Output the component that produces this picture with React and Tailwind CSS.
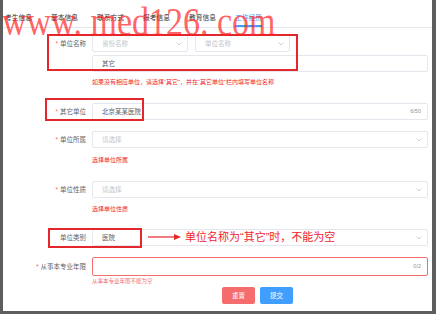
import React from "react";

const Chevron = () => (
  <svg width="6" height="4" viewBox="0 0 6 4" className="shrink-0">
    <path d="M0.6 0.6 L3 3 L5.4 0.6" fill="none" stroke="#c0c4cc" strokeWidth="0.8" />
  </svg>
);

const Label = ({ children, req = true }) => (
  <div className="w-[83px] shrink-0 text-right text-[6.5px] text-[#606266] h-[17px] leading-[17px]">
    {req && <span className="text-[#f56c6c] mr-[2px]">*</span>}
    {children}
  </div>
);

const Select = ({ w, text, placeholder = true }) => (
  <div
    className={`${w} h-[17px] border border-[#e4e7ed] rounded-[2px] flex items-center justify-between pl-[9px] pr-[5px] text-[6.5px] ${
      placeholder ? "text-[#c0c4cc]" : "text-[#606266]"
    }`}
  >
    <span>{text}</span>
    <Chevron />
  </div>
);

const Hint = ({ children, cls }) => (
  <div className={`pl-[89px] text-[6px] leading-[8px] text-[#f0262b] ${cls}`}>{children}</div>
);

export default function App() {
  return (
    <div className="relative w-[436px] h-[314px] overflow-hidden bg-white border-l-[3px] border-r-[4px] border-b-[3px] border-[#5e5e5e] font-['Liberation_Sans','Noto_Sans_CJK_SC',sans-serif]">
      {/* tabs */}
      <div className="flex h-[28px] border-b border-[#e4e7ed] pl-[2px] gap-[19px] text-[6.75px] text-[#303133]">
        {["考生信息", "基本信息", "联系方式", "报考信息", "教育信息"].map((t) => (
          <div key={t} className="h-[27px] pt-[14px] leading-[8px]">{t}</div>
        ))}
        <div className="h-[27px] pt-[14px] leading-[8px] text-[#409eff] border-b-2 border-[#409eff]">工作经历</div>
      </div>

      {/* form */}
      <div className="pr-[4px]">
        <div className="flex mt-[7px]">
          <Label>单位名称</Label>
          <div className="ml-[6px] flex-1 flex flex-col gap-[3px]">
            <div className="flex gap-[7px]">
              <Select w="w-[96px]" text="省份名称" />
              <Select w="w-[95px]" text="单位名称" />
            </div>
            <div className="h-[17px] border border-[#e4e7ed] rounded-[2px] pl-[9px] text-[6.5px] leading-[15px] text-[#606266]">其它</div>
          </div>
        </div>
        <Hint cls="mt-[6px]">如果没有相应单位，请选择“其它”，并在“其它单位”栏内填写单位名称</Hint>

        <div className="flex mt-[17px]">
          <Label>其它单位</Label>
          <div className="ml-[6px] flex-1 h-[17px] border border-[#e4e7ed] rounded-[2px] flex items-center justify-between pl-[9px] pr-[6px] text-[6.5px] text-[#606266]">
            <span>北京某某医院</span>
            <span className="text-[5.5px] text-[#909399]">6/50</span>
          </div>
        </div>

        <div className="flex mt-[11px]">
          <Label>单位所属</Label>
          <div className="ml-[6px] flex-1">
            <Select w="w-full" text="请选择" />
          </div>
        </div>
        <Hint cls="mt-[8px]">选择单位所属</Hint>

        <div className="flex mt-[17px]">
          <Label>单位性质</Label>
          <div className="ml-[6px] flex-1">
            <Select w="w-full" text="请选择" />
          </div>
        </div>
        <Hint cls="mt-[7px]">选择单位性质</Hint>

        <div className="flex mt-[16px]">
          <Label req={false}>单位类别</Label>
          <div className="ml-[6px] flex-1">
            <Select w="w-full" text="医院" placeholder={false} />
          </div>
        </div>

        <div className="flex mt-[11px]">
          <div className="w-[83px] shrink-0 text-right text-[6.5px] text-[#606266] h-[19px] leading-[19px]">
            <span className="text-[#f56c6c] mr-[2px]">*</span>从事本专业年限
          </div>
          <div className="ml-[6px] flex-1 h-[19px] border border-[#f56c6c] rounded-[2px] flex items-center justify-end pr-[6px]">
            <span className="text-[5.5px] text-[#909399]">0/2</span>
          </div>
        </div>
        <div className="pl-[89px] text-[5.5px] leading-[7px] mt-[2px] text-[#f56c6c]">从事本专业年限不能为空</div>

        <div className="flex justify-center gap-[5px] mt-[2px] pl-[84px]">
          <div className="w-[33px] h-[17px] rounded-[2px] bg-[#f56c6c] text-white text-[6.5px] flex items-center justify-center">重置</div>
          <div className="w-[33px] h-[17px] rounded-[2px] bg-[#409eff] text-white text-[6.5px] flex items-center justify-center">提交</div>
        </div>
      </div>

      {/* annotations */}
      <div className="absolute left-[44px] top-[34px] w-[251px] h-[37px] border-2 border-[#e5262b]" />
      <div className="absolute left-[42px] top-[98px] w-[99px] h-[23px] border-2 border-[#e5262b]" />
      <div className="absolute left-[45px] top-[228px] w-[94px] h-[20px] border-2 border-[#e5262b]" />
      <svg className="absolute left-[145px] top-[233px]" width="34" height="8" viewBox="0 0 34 8">
        <line x1="0" y1="4" x2="28" y2="4" stroke="#e5262b" strokeWidth="1.2" />
        <path d="M26 1 L33 4 L26 7 Z" fill="#e5262b" />
      </svg>
      <div className="absolute left-[182px] top-[230px] text-[11px] leading-[14px] text-[#f0262b] whitespace-nowrap">
        单位名称为“其它”时，不能为空
      </div>

      {/* watermark */}
      <div className="absolute left-[-1px] top-[2px] origin-left scale-x-[0.85] text-[40px] leading-[40px] text-[#ff2020]/70 font-['Liberation_Serif',serif] whitespace-nowrap pointer-events-none">
        www. med126. com
      </div>
    </div>
  );
}
